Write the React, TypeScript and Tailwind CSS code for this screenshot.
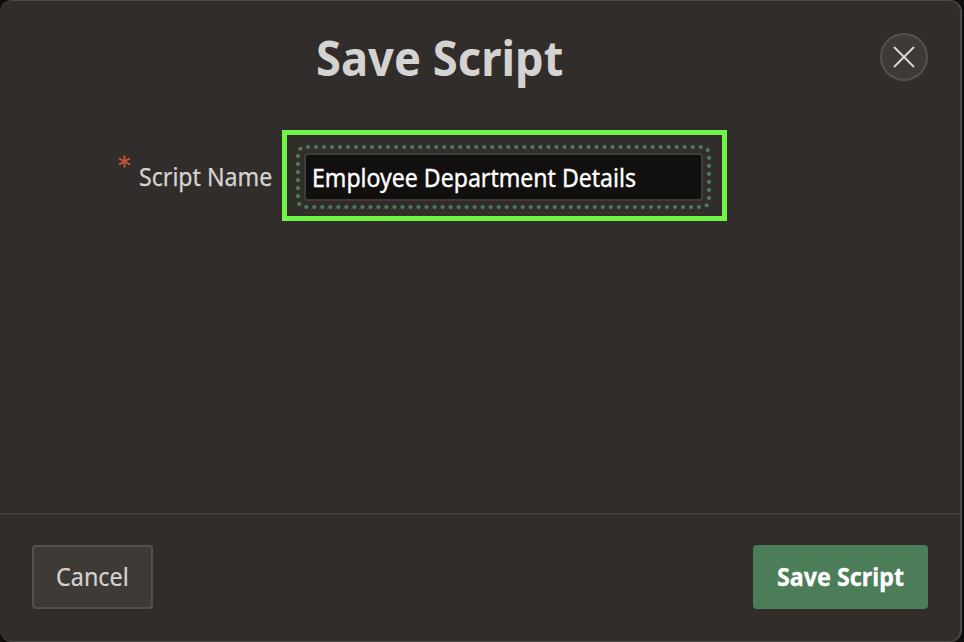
import React from "react";

function FocusRing() {
  return (
    <svg className="pointer-events-none absolute left-[4px] top-[5px]" width="425" height="74" fill="none">
      <path
        d="M17 7H411A7 7 0 0 1 418 14V60A7 7 0 0 1 411 67H14A7 7 0 0 1 7 60V14A7 7 0 0 1 14 7Z"
        stroke="#4b7d5a"
        strokeWidth="4.2"
        strokeLinecap="round"
        strokeDasharray="0 8"
        pathLength="928"
      />
    </svg>
  );
}

export default function App() {
  return (
    <div className="h-[642px] w-[964px] overflow-hidden bg-[#100f0e] font-['Noto_Sans','Open_Sans',sans-serif] text-[#d5d3d1]">
      <div className="flex h-[642px] w-[962px] flex-col rounded-[12px] border-t border-r-2 border-b border-t-[#4d4947] border-r-[#4d4947] border-b-[#4d4947] bg-[#312d2a]">
        <header className="flex h-[129px] shrink-0 justify-between pr-[32px]">
          <h1 className="ml-[316px] mt-[21px] h-[70px] w-[250px] origin-left scale-x-[0.925] whitespace-nowrap text-[49px] font-bold leading-[70px]">
            Save Script
          </h1>
          <button className="mt-[32px] flex size-[48px] items-center justify-center rounded-full border-2 border-[#55514e] bg-[#3e3a36]" aria-label="Close">
            <svg width="22" height="22" fill="none" stroke="#dcdad7" strokeWidth="1.8">
              <path d="M1 1 21 21M21 1 1 21" />
            </svg>
          </button>
        </header>
        <main className="flex flex-1 items-start">
          <div className="flex h-[91px] w-[282px] shrink-0">
            <svg className="ml-[118px] mt-[25px] shrink-0" width="13" height="13" fill="none" stroke="#c4513d" strokeWidth="2">
              <path d="M6.5 .5V12.5M1 3.3 12 9.7M12 3.3 1 9.7" />
            </svg>
            <label className="ml-[8px] mt-[29px] h-[36px] origin-left scale-x-[0.945] whitespace-nowrap text-[24.5px] leading-[36px] [-webkit-text-stroke:0.25px]">
              Script Name
            </label>
          </div>
          <div className="relative h-[91px] w-[445px] border-[5px] border-[#72f548] px-[17px] pt-[18px]">
            <FocusRing />
            <div className="flex h-[48px] w-[399px] items-center rounded-[4px] border-2 border-[#403c39] bg-[#11100e] pl-[6px] pt-[2px] text-white">
              <span className="origin-left scale-x-[0.942] whitespace-nowrap text-[24.5px] leading-[36px] [-webkit-text-stroke:0.35px]">Employee Department Details</span>
            </div>
          </div>
        </main>
        <footer className="flex h-[128px] shrink-0 items-start justify-between border-t-2 border-[#403c39] pl-[32px] pr-[32px] pt-[30px]">
          <button className="flex h-[64px] w-[121px] items-center rounded-[4px] border-2 border-[#53504b] bg-[#3e3b36] pl-[22px] text-[25px]">
            <span className="origin-left scale-x-[0.935] [-webkit-text-stroke:0.2px]">Cancel</span>
          </button>
          <button className="flex h-[64px] w-[175px] items-center whitespace-nowrap rounded-[4px] bg-[#4b7d58] pl-[24px] text-[24.5px] font-bold text-white">
            <span className="origin-left scale-x-[0.95] [-webkit-text-stroke:0.3px]">Save Script</span>
          </button>
        </footer>
      </div>
    </div>
  );
}
